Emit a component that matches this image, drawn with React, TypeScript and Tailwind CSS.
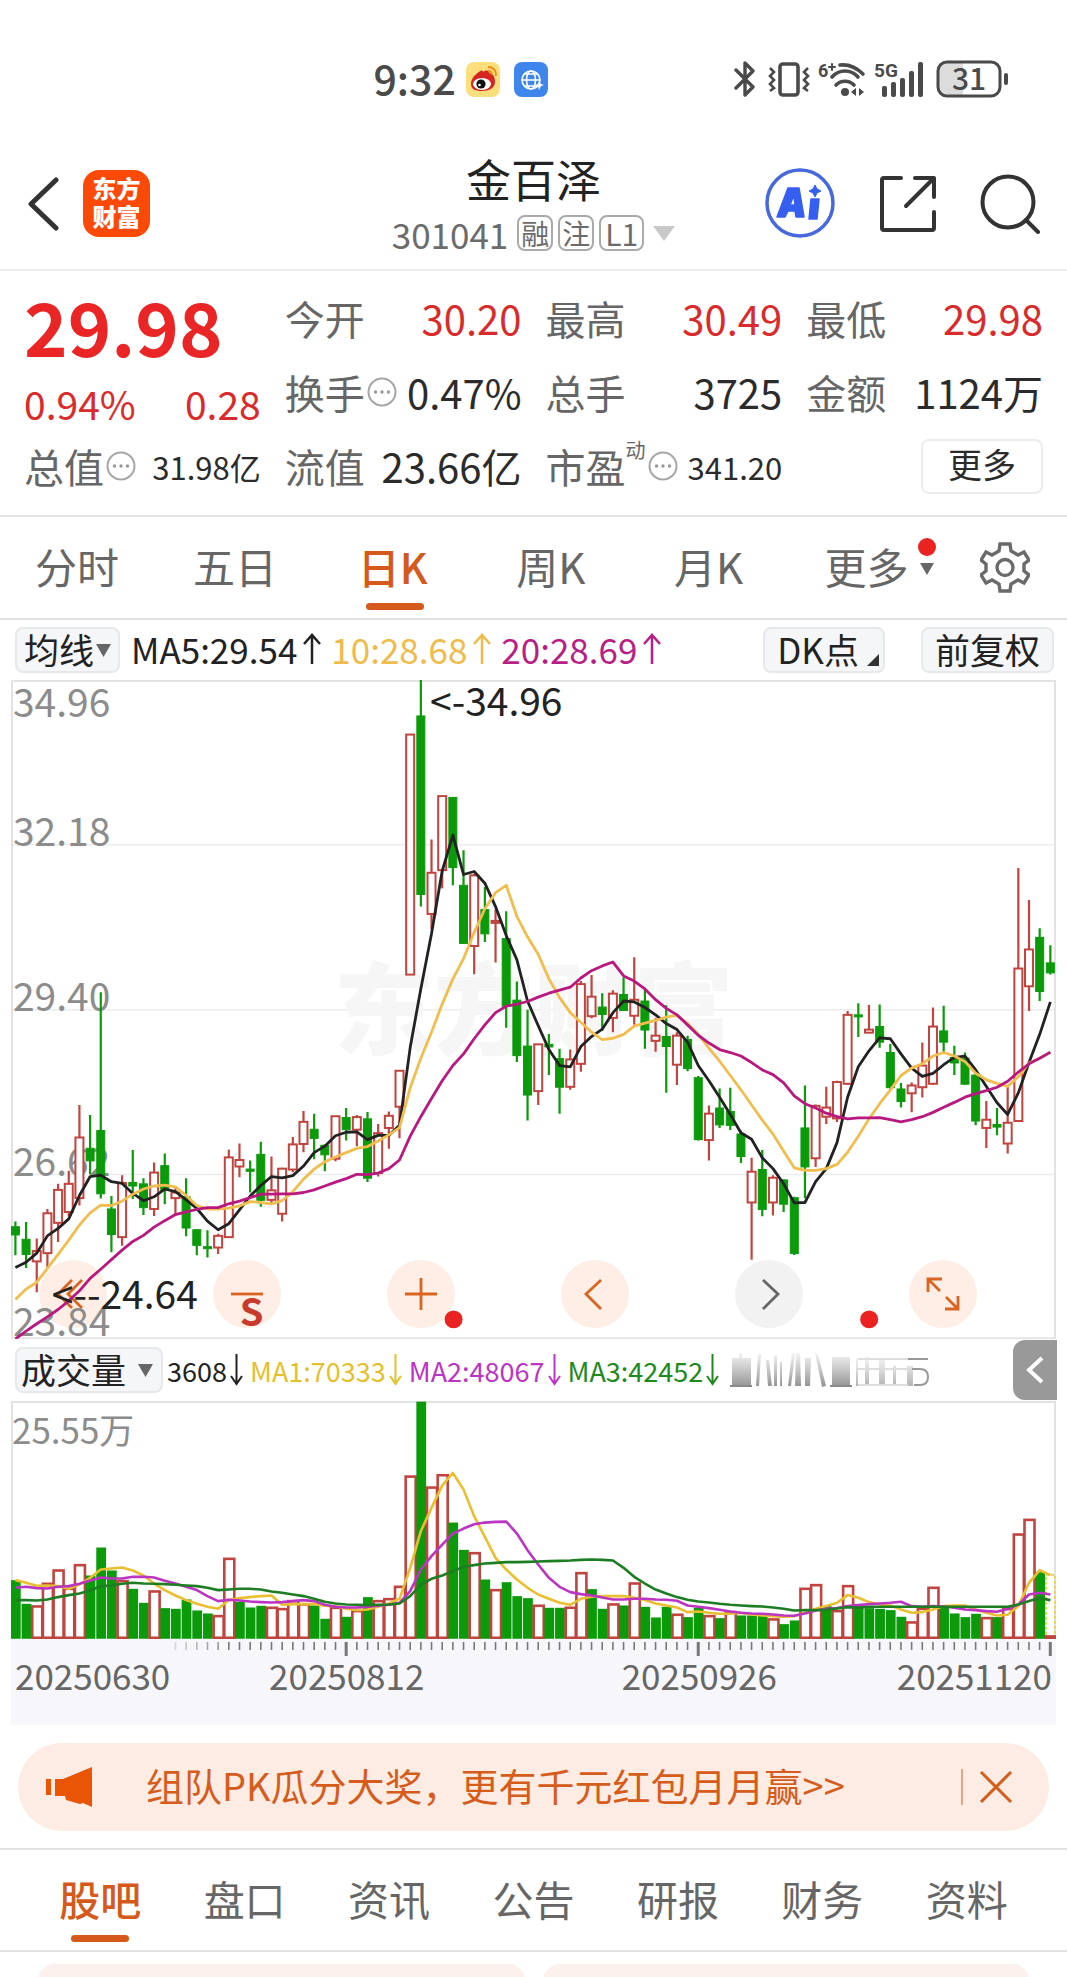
import React, { useState } from 'react';

type Kind = 'u' | 'd';
type Candle = [Kind, number, number, number, number];
type Volume = [Kind, number];

const UP = '#c0443f';
const DOWN = '#0a9a0a';
const STEP = 10.68;
const ORIGIN = 4.4;

// direction, high, body top, body bottom, low (chart units, growing downwards)
const candles: Candle[] = [
  ['d', 1272, 1284, 1303, 1350], ['d', 1273, 1313, 1348, 1379], ['u', 1311, 1340, 1364, 1435], ['u', 1243, 1253, 1345, 1378],
  ['u', 1185, 1199, 1275, 1319], ['u', 1155, 1185, 1250, 1260], ['u', 1003, 1078, 1218, 1235], ['d', 1026, 1103, 1132, 1163],
  ['d', 743, 1062, 1208, 1219], ['d', 1213, 1243, 1302, 1343], ['u', 1165, 1183, 1308, 1328], ['d', 1107, 1182, 1190, 1220],
  ['d', 1172, 1185, 1240, 1257], ['u', 1136, 1159, 1243, 1259], ['d', 1115, 1143, 1200, 1232], ['u', 1195, 1205, 1218, 1255],
  ['d', 1172, 1215, 1287, 1306], ['d', 1290, 1291, 1327, 1350], ['d', 1292, 1330, 1334, 1355], ['u', 1300, 1305, 1332, 1347],
  ['u', 1106, 1124, 1308, 1308], ['u', 1092, 1130, 1145, 1170], ['d', 1131, 1151, 1156, 1205], ['d', 1088, 1117, 1223, 1238],
  ['u', 1122, 1200, 1222, 1230], ['u', 1148, 1150, 1254, 1272], ['u', 1077, 1094, 1152, 1158], ['u', 1017, 1042, 1093, 1112],
  ['d', 1023, 1059, 1080, 1128], ['d', 1094, 1096, 1118, 1156], ['u', 1028, 1029, 1127, 1133], ['d', 1010, 1032, 1060, 1085],
  ['u', 1026, 1031, 1060, 1098], ['d', 1019, 1035, 1172, 1181], ['u', 1047, 1068, 1160, 1168], ['u', 1018, 1028, 1056, 1104],
  ['u', 923, 924, 1007, 1080], ['u', 147, 148, 702, 703], ['d', 22, 105, 517, 545], ['u', 390, 467, 562, 597],
  ['u', 290, 290, 461, 503], ['d', 292, 293, 455, 496], ['d', 415, 496, 630, 631], ['u', 470, 473, 636, 701],
  ['d', 500, 552, 608, 627], ['u', 552, 578, 582, 674], ['d', 556, 619, 775, 825], ['d', 718, 761, 889, 904],
  ['d', 783, 867, 980, 1039], ['u', 862, 863, 971, 1003], ['d', 839, 863, 869, 934], ['d', 873, 896, 962, 1023],
  ['u', 875, 898, 961, 968], ['u', 717, 724, 908, 926], ['u', 703, 753, 798, 803], ['d', 745, 777, 794, 832],
  ['u', 738, 746, 802, 835], ['d', 708, 748, 785, 785], ['u', 662, 760, 797, 818], ['d', 736, 763, 830, 873],
  ['u', 803, 843, 855, 880], ['d', 773, 845, 868, 975], ['u', 835, 843, 910, 957], ['d', 843, 852, 919, 925],
  ['d', 936, 940, 1083, 1085], ['u', 1004, 1023, 1084, 1131], ['d', 965, 1010, 1049, 1056], ['d', 963, 1018, 1050, 1061],
  ['d', 1062, 1070, 1122, 1137], ['u', 1125, 1157, 1228, 1360], ['d', 1107, 1152, 1244, 1260], ['u', 1165, 1171, 1228, 1258],
  ['d', 1175, 1176, 1232, 1250], ['d', 1215, 1217, 1346, 1349], ['d', 958, 1056, 1146, 1218], ['u', 1002, 1005, 1126, 1146],
  ['u', 961, 1009, 1030, 1047], ['u', 947, 950, 1034, 1042], ['u', 786, 795, 954, 957], ['d', 768, 795, 799, 846],
  ['u', 772, 829, 836, 836], ['d', 771, 822, 858, 871], ['d', 862, 882, 963, 970], ['d', 952, 966, 995, 1009],
  ['u', 951, 958, 976, 1020], ['u', 859, 912, 962, 986], ['u', 778, 822, 954, 957], ['d', 774, 832, 858, 885],
  ['d', 866, 893, 906, 934], ['d', 882, 895, 955, 957], ['d', 928, 934, 1040, 1050], ['u', 994, 1037, 1056, 1102],
  ['d', 1010, 1048, 1054, 1073], ['u', 960, 1044, 1092, 1115], ['u', 456, 688, 1040, 1040], ['u', 530, 644, 729, 786],
  ['d', 595, 616, 741, 763], ['d', 634, 675, 698, 702],
];

const ma5 = [
  1378, 1366, 1345, 1305, 1288, 1266, 1212, 1168, 1165, 1180, 1184, 1207, 1224, 1215, 1197, 1203, 1222, 1242, 1271, 1291,
  1277, 1245, 1213, 1189, 1168, 1171, 1166, 1144, 1113, 1098, 1074, 1066, 1065, 1083, 1073, 1073, 1050, 870, 735, 608,
  463, 380, 471, 464, 491, 545, 612, 668, 763, 820, 875, 912, 915, 868, 845, 828, 790, 763, 765, 778,
  795, 815, 829, 858, 912, 947, 985, 1025, 1067, 1082, 1125, 1150, 1185, 1229, 1228, 1180, 1150, 1090, 985, 915,
  878, 848, 850, 885, 918, 937, 930, 910, 893, 890, 922, 960, 998, 1025, 975, 905, 840, 765,
];
const ma10 = [
  1452, 1428, 1412, 1380, 1348, 1315, 1280, 1252, 1234, 1235, 1225, 1209, 1197, 1190, 1188, 1192, 1212, 1235, 1243, 1243,
  1241, 1236, 1226, 1228, 1231, 1224, 1203, 1174, 1151, 1134, 1123, 1113, 1103, 1099, 1086, 1072, 1055, 963, 895, 835,
  770, 712, 665, 605, 550, 513, 496, 568, 615, 655, 712, 755, 790, 812, 835, 852, 849, 840, 821, 814,
  808, 800, 796, 815, 840, 872, 902, 935, 968, 1003, 1038, 1070, 1110, 1148, 1154, 1154, 1150, 1140, 1112, 1075,
  1035, 1000, 968, 935, 918, 908, 890, 882, 890, 903, 930, 945, 953, 960, 938, 906, 895, 882,
];
const ma20 = [
  1543, 1525, 1508, 1492, 1475, 1455, 1432, 1403, 1382, 1360, 1338, 1318, 1304, 1285, 1270, 1256, 1250, 1244, 1240, 1240,
  1231, 1225, 1217, 1209, 1209, 1208, 1208, 1205, 1199, 1190, 1181, 1173, 1163, 1164, 1160, 1150, 1130, 1075, 1030, 988,
  947, 912, 885, 850, 818, 790, 775, 770, 764, 754, 745, 738, 731, 710, 693, 682, 673, 705, 717, 735,
  760, 780, 795, 818, 842, 860, 875, 882, 890, 905, 922, 933, 952, 982, 1000, 1010, 1022, 1030, 1035, 1033,
  1033, 1032, 1037, 1042, 1037, 1030, 1020, 1008, 997, 985, 977, 970, 962, 948, 927, 908, 895, 881,
];

const volumes: Volume[] = [
  ['d', 752], ['d', 823], ['u', 828], ['u', 760], ['u', 720], ['u', 775], ['u', 704], ['d', 738], ['d', 654], ['d', 723],
  ['u', 752], ['d', 778], ['d', 820], ['u', 783], ['d', 836], ['d', 838], ['d', 810], ['d', 843], ['d', 852], ['u', 857],
  ['u', 685], ['d', 817], ['d', 834], ['d', 829], ['u', 832], ['u', 836], ['u', 812], ['u', 822], ['d', 828], ['d', 868],
  ['u', 832], ['d', 862], ['u', 842], ['d', 803], ['u', 812], ['u', 806], ['u', 769], ['u', 438], ['d', 216], ['u', 471],
  ['u', 434], ['d', 579], ['d', 661], ['u', 668], ['d', 750], ['u', 779], ['d', 758], ['d', 800], ['d', 806], ['u', 826],
  ['d', 835], ['d', 835], ['u', 832], ['u', 728], ['d', 779], ['d', 838], ['u', 822], ['d', 828], ['u', 759], ['d', 832],
  ['d', 864], ['d', 832], ['u', 853], ['d', 863], ['d', 835], ['u', 857], ['d', 866], ['u', 845], ['d', 858], ['d', 858],
  ['d', 858], ['u', 867], ['d', 884], ['d', 873], ['u', 775], ['u', 764], ['d', 830], ['u', 842], ['u', 767], ['d', 825],
  ['d', 836], ['d', 838], ['d', 842], ['d', 862], ['u', 876], ['u', 835], ['u', 772], ['d', 832], ['d', 852], ['d', 863],
  ['d', 853], ['u', 863], ['d', 863], ['u', 836], ['u', 612], ['u', 568], ['d', 728], ['u', 918],
];
const vol5 = [
  752, 760, 769, 768, 770, 778, 765, 745, 720, 717, 714, 723, 738, 762, 782, 798, 812, 823, 832, 838,
  812, 806, 803, 800, 798, 826, 824, 824, 824, 829, 830, 838, 842, 840, 832, 822, 808, 715, 605, 535,
  468, 430, 480, 560, 622, 685, 720, 750, 775, 795, 808, 820, 826, 808, 802, 800, 800, 800, 805, 812,
  822, 828, 834, 848, 846, 850, 853, 853, 850, 855, 858, 860, 862, 860, 850, 838, 830, 820, 797, 805,
  818, 825, 828, 840, 850, 848, 840, 830, 828, 828, 840, 850, 858, 856, 830, 760, 722, 737,
];
const vol10 = [
  775, 772, 776, 777, 772, 770, 763, 753, 744, 747, 747, 742, 742, 744, 754, 762, 772, 782, 800, 815,
  811, 813, 816, 818, 819, 818, 815, 812, 815, 826, 832, 834, 834, 832, 829, 826, 820, 785, 720, 680,
  645, 612, 597, 584, 579, 577, 576, 612, 662, 705, 745, 772, 788, 794, 798, 804, 810, 810, 808, 808,
  810, 811, 814, 828, 832, 836, 841, 846, 850, 852, 853, 855, 858, 859, 852, 843, 838, 836, 830, 827,
  824, 822, 820, 817, 830, 832, 830, 831, 835, 840, 842, 845, 847, 838, 825, 795, 790, 795,
];
const vol20 = [
  812, 812, 813, 810, 803, 797, 792, 783, 770, 768, 763, 760, 762, 763, 764, 766, 768, 770, 775, 782,
  780, 778, 778, 780, 786, 790, 795, 800, 808, 817, 822, 825, 826, 827, 826, 825, 822, 800, 765, 748,
  738, 725, 712, 707, 702, 700, 698, 698, 697, 696, 695, 694, 693, 691, 690, 691, 693, 715, 742, 762,
  780, 792, 803, 811, 816, 819, 823, 826, 828, 830, 831, 834, 838, 843, 842, 842, 841, 837, 833, 835,
  832, 832, 832, 832, 832, 832, 832, 832, 832, 832, 832, 832, 832, 832, 825, 815, 806, 812,
];

const xAt = (i: number) => ORIGIN + i * STEP;
const priceY = (v: number) => ((v - 22) * 660) / 1522;
const volumeY = (v: number) => (v - 214) / 3;
const toPoints = (values: number[], scale: (v: number) => number) =>
  values.map((v, i) => `${xAt(i).toFixed(1)},${scale(v).toFixed(1)}`).join(' ');

const priceLabels: [string, number][] = [['34.96', 37], ['32.18', 166], ['29.40', 331], ['26.62', 496], ['23.84', 657]];

const StatusIcons: React.FC = () => (
  <div className="flex items-center text-[#4a4a4a]">
    <svg width="22" height="36" viewBox="0 0 22 36" fill="none" stroke="currentColor" strokeWidth="3.400" strokeLinejoin="round" strokeLinecap="round">
      <path d="M2 9l17 17-8 8V2l8 8L2 27" />
    </svg>
    <svg className="ml-3" width="42" height="36" viewBox="0 0 42 36" fill="none" stroke="currentColor">
      <rect x="12" y="3" width="18" height="31" rx="3" strokeWidth="3.600" />
      <path d="M2 7l4 4-4 4 4 4-4 4 4 4-4 3M40 7l-4 4 4 4-4 4 4 4-4 4 4 3" strokeWidth="2.600" />
    </svg>
    <svg className="ml-2" width="48" height="38" viewBox="0 0 48 38" fill="none" stroke="currentColor" strokeWidth="3.600" strokeLinecap="round">
      <text x="0" y="17" fontSize="18" fontWeight="bold" fill="currentColor" stroke="none" fontFamily="Roboto">6</text>
      <path d="M11 7h6M14 4v6" strokeWidth="2" />
      <path d="M22 5c9-1 17 3 23 9M14 17c7-8 19-8 26 0M18 25c5-5 13-5 18 0" />
      <circle cx="27" cy="32" r="4" fill="currentColor" stroke="none" />
      <path d="M38 28v8l-5-4zM41 28v8l5-4z" fill="currentColor" stroke="none" />
    </svg>
    <svg className="ml-2" width="50" height="38" viewBox="0 0 50 38" fill="currentColor">
      <text x="0" y="17" fontSize="19" fontWeight="bold" fontFamily="Roboto">5G</text>
      <rect x="8" y="26" width="5" height="11" rx="2" />
      <rect x="17" y="22" width="5" height="15" rx="2" />
      <rect x="26" y="18" width="5" height="19" rx="2" />
      <rect x="35" y="11" width="5" height="26" rx="2" />
      <rect x="44" y="2" width="5" height="35" rx="2" />
    </svg>
    <svg className="ml-3" width="73" height="38" viewBox="0 0 73 38">
      <path d="M27 3H12Q3 3 3 12v14q0 9 9 9h15z" fill="#dcdcdc" />
      <rect x="2" y="2" width="62" height="34" rx="9" fill="none" stroke="currentColor" strokeWidth="3" />
      <rect x="68" y="13" width="4" height="12" rx="2" fill="currentColor" />
      <text x="33" y="30" textAnchor="middle" fontSize="30" fontWeight="500" fill="currentColor">31</text>
    </svg>
  </div>
);

const StatusBar: React.FC = () => (
  <div className="flex h-[134px] items-center justify-between pr-[58px] pl-[35%] pt-6">
    <div className="flex items-center">
      <span className="pb-1 text-[41px] font-medium text-[#4a4a4a]">9:32</span>
      <svg className="ml-[10px]" width="34" height="35" viewBox="0 0 34 35">
        <rect width="34" height="35" rx="8" fill="#fbdf7c" />
        <path d="M5 22c0-6 5-10 8-12 2-2 4-2 4 0 3-2 6-2 6 1 5 1 6 5 6 9 0 6-6 9-13 9S5 27 5 22z" fill="#d5251f" />
        <ellipse cx="16" cy="22" rx="9" ry="6" fill="#fff" />
        <circle cx="15" cy="22" r="4.600" fill="#111" />
        <circle cx="13.500" cy="23" r="1.300" fill="#fff" />
        <path d="M22 9q4 0 4 4M22 5q8 0 8 9" stroke="#f08a1c" strokeWidth="1.800" fill="none" />
      </svg>
      <svg className="ml-[14px]" width="34" height="35" viewBox="0 0 34 35">
        <rect width="34" height="35" rx="8" fill="#3f86ec" />
        <g fill="none" stroke="#fff" strokeWidth="1.600">
          <circle cx="17" cy="18" r="9" />
          <ellipse cx="17" cy="18" rx="4.500" ry="9" />
          <path d="M8 18h18M10 12h14M10 24h14" />
        </g>
        <path d="M25 19l2 3 3 1-3 1-2 4-1-4-3-1 3-1z" fill="#fff" />
      </svg>
    </div>
    <StatusIcons />
  </div>
);

const Header: React.FC = () => (
  <header className="grid h-[137px] grid-cols-[1fr_auto_1fr] items-center border-b-2 border-[#ececec] px-[27px] pt-1">
    <div className="flex items-center gap-6">
      <button aria-label="返回">
        <svg width="32" height="54" viewBox="0 0 32 54" fill="none" stroke="#333" strokeWidth="5" strokeLinecap="round" strokeLinejoin="round">
          <path d="M29 3L4 27l25 24" />
        </svg>
      </button>
      <a href="#home" className="flex h-[67px] w-[67px] flex-col items-center justify-center rounded-2xl bg-[#fb4a07] pb-1 text-2xl leading-[28px] font-black text-white">
        <span>东方</span>
        <span>财富</span>
      </a>
    </div>
    <div className="flex flex-col items-center gap-[14px]">
      <h1 className="text-[45px] text-[#222]">金百泽</h1>
      <div className="flex items-center gap-[5px] text-[#6b6b6b]">
        <span className="pr-1 text-[35px]">301041</span>
        <span className="rounded-lg border-2 border-[#aaa] px-[2px] text-[28px] leading-[32px]">融</span>
        <span className="rounded-lg border-2 border-[#aaa] px-[2px] text-[28px] leading-[32px]">注</span>
        <span className="rounded-lg border-2 border-[#aaa] px-1 text-[30px] leading-[32px]">L1</span>
        <svg className="ml-1" width="22" height="15" viewBox="0 0 22 15"><path d="M0 0h22L11 15z" fill="#c9c9c9" /></svg>
      </div>
    </div>
    <div className="flex items-center justify-end gap-[43px]">
      <button aria-label="AI">
        <svg width="71" height="71" viewBox="0 0 71 71">
          <circle cx="35" cy="35" r="33" fill="none" stroke="#4668dc" strokeWidth="3.500" />
          <path d="M23 20h11l5 29h-8l-1-6h-7l-3 6h-8zM29 27l-4 10h5z" fill="#355ff0" stroke="#355ff0" strokeWidth="1.500" strokeLinejoin="round" fillRule="evenodd" />
          <path d="M46 31h8l-2 20h-8z" fill="#355ff0" stroke="#355ff0" strokeWidth="1.500" strokeLinejoin="round" />
          <path d="M50 17l2 4 4 2-4 2-2 4-2-4-4-2 4-2z" fill="#355ff0" stroke="#355ff0" strokeWidth="1" />
        </svg>
      </button>
      <button aria-label="分享">
        <svg width="58" height="58" viewBox="0 0 58 58" fill="none" stroke="#333" strokeWidth="4" strokeLinecap="round" strokeLinejoin="round">
          <path d="M22 3H5q-2 0-2 2v48q0 2 2 2h48q2 0 2-2V37M36 3h19v19M55 3L27 31" />
        </svg>
      </button>
      <button aria-label="搜索">
        <svg width="60" height="60" viewBox="0 0 60 60" fill="none" stroke="#333" strokeWidth="4" strokeLinecap="round">
          <circle cx="28" cy="28" r="25.500" />
          <path d="M46 46l12 12" />
        </svg>
      </button>
    </div>
  </header>
);

const InfoDot: React.FC = () => (
  <svg className="ml-[2px] shrink-0" width="30" height="30" viewBox="0 0 30 30" fill="#999">
    <circle cx="15" cy="15" r="13.500" fill="none" stroke="#a6a6a6" strokeWidth="2" />
    <circle cx="8.500" cy="15" r="1.700" /><circle cx="15" cy="15" r="1.700" /><circle cx="21.500" cy="15" r="1.700" />
  </svg>
);

type QuoteProps = { label: string; value: string; red?: boolean; small?: boolean; info?: boolean; sup?: string };

const Quote: React.FC<QuoteProps> = ({ label, value, red, small, info, sup }) => (
  <div className="flex h-[74px] items-center justify-between whitespace-nowrap">
    <span className="flex items-center text-[40px] text-[#666]">
      {label}
      {sup && <span className="pb-8 text-xl">{sup}</span>}
      {info && <InfoDot />}
    </span>
    <span className={`${small ? 'text-[31px]' : 'text-[40px]'} ${red ? 'text-[#d92b2b]' : 'text-[#2b2b2b]'}`}>{value}</span>
  </div>
);

const QuotePanel: React.FC = () => (
  <section className="grid grid-cols-4 gap-6 border-b-2 border-[#e2e2e2] px-6 pt-[10px] pb-3">
    <div>
      <div className="flex h-[96px] items-center pb-2 text-[74px] font-bold text-[#e92526]">29.98</div>
      <div className="flex h-[52px] items-center justify-between text-[39px] text-[#d92b2b]">
        <span>0.94%</span>
        <span>0.28</span>
      </div>
      <Quote label="总值" value="31.98亿" small info />
    </div>
    <div>
      <Quote label="今开" value="30.20" red />
      <Quote label="换手" value="0.47%" info />
      <Quote label="流值" value="23.66亿" />
    </div>
    <div>
      <Quote label="最高" value="30.49" red />
      <Quote label="总手" value="3725" />
      <Quote label="市盈" value="341.20" sup="动" small info />
    </div>
    <div>
      <Quote label="最低" value="29.98" red />
      <Quote label="金额" value="1124万" />
      <div className="flex h-[74px] items-center justify-end">
        <button className="h-[55px] w-[122px] rounded-lg border-2 border-[#ececec] pb-1 text-[34px] text-[#2b2b2b]">更多</button>
      </div>
    </div>
  </section>
);

const PeriodTabs: React.FC = () => {
  const [active, setActive] = useState('日K');
  return (
    <nav className="flex h-[103px] border-b-2 border-[#e2e2e2] pr-1 text-[42px] text-[#666]">
      {['分时', '五日', '日K', '周K', '月K', '更多'].map(tab => (
        <button
          key={tab}
          onClick={() => setActive(tab)}
          className={`relative flex-4 pr-1 pb-1 ${active === tab ? 'font-medium text-[#d4591a]' : ''}`}
        >
          {tab}
          {active === tab && <span className="absolute bottom-[8px] left-1/2 h-[7px] w-[58px] -translate-x-1/2 rounded-full bg-[#d4591a]" />}
          {tab === '更多' && (
            <svg className="absolute top-[21px] right-3" width="18" height="38" viewBox="0 0 18 38">
              <circle cx="9" cy="9" r="9" fill="#ea2222" />
              <path d="M2 25h14L9 37z" fill="#666" />
            </svg>
          )}
        </button>
      ))}
      <button aria-label="设置" className="flex flex-3 items-center justify-center">
        <svg width="50" height="51" viewBox="0 0 50 51" fill="none" stroke="#6a6a6a" strokeWidth="3.400">
          <path d="M20 2h10l1 7 7 4 6-3 5 8-5 4v7l5 4-5 8-6-3-7 4-1 7H20l-1-7-7-4-6 3-5-8 5-4v-7l-5-4 5-8 6 3 7-4z" />
          <circle cx="25" cy="25.500" r="8" />
        </svg>
      </button>
    </nav>
  );
};

const chip = 'flex h-[46px] shrink-0 items-center whitespace-nowrap rounded-lg border-2 border-[#e6e8ec] bg-[#f5f6f8] pb-1 text-[35px] text-[#222]';

const Arrow: React.FC<{ down?: boolean }> = ({ down }) => (
  <svg className={down ? 'mx-[3px] shrink-0' : 'mx-[5px] shrink-0'} width={down ? 13 : 20} height="32" viewBox={down ? '0 0 13 32' : '0 0 20 32'} fill="none" stroke="currentColor" strokeWidth={down ? 2 : 2.5}>
    <path d={down ? 'M6.500 0v30M1 22l5.500 8 5.500-8' : 'M10 32V3M2 12l8-9 8 9'} />
  </svg>
);

const AverageRow: React.FC = () => (
  <div className="flex h-[60px] items-center justify-between pr-[13px] pl-[15px]">
    <div className="flex items-center text-[35px]">
      <button className={`${chip} gap-[2px] px-[7px]`}>
        均线
        <svg className="mt-1" width="15" height="13" viewBox="0 0 15 13"><path d="M0 0h15L7.500 13z" fill="#666" /></svg>
      </button>
      <span className="ml-[11px] flex items-center pb-1 text-[#222]">MA5:29.54<Arrow /></span>
      <span className="ml-1 flex items-center pb-1 text-[#efbb4c]">10:28.68<Arrow /></span>
      <span className="ml-1 flex items-center pb-1 text-[#b81f86]">20:28.69<Arrow /></span>
    </div>
    <div className="flex gap-9">
      <button className={`${chip} gap-2 pr-1 pl-3`}>
        DK点
        <svg className="mt-6" width="12" height="12" viewBox="0 0 12 12"><path d="M12 0v12H0z" fill="#333" /></svg>
      </button>
      <button className={`${chip} px-3`}>前复权</button>
    </div>
  </div>
);

const tools: { name: string; path: string; muted?: boolean }[] = [
  { name: '最早', path: 'M33 20L19 34l14 14M43 20L29 34l14 14' },
  { name: '缩小', path: 'M18 34h32' },
  { name: '放大', path: 'M18 34h32M34 18v32' },
  { name: '左移', path: 'M40 20L25 34l15 15' },
  { name: '右移', path: 'M28 20l15 14-15 15', muted: true },
  { name: '全屏', path: 'M19 32V19h14M19 19l12 12M49 36v13H36M49 49L37 37' },
];

const KLineChart: React.FC = () => (
  <div className="relative mx-[11px]">
    <div className="absolute right-[79px] bottom-[11px] left-7 flex justify-between">
      {tools.map(tool => (
        <button key={tool.name} aria-label={tool.name} className={`h-[68px] w-[68px] rounded-full ${tool.muted ? 'bg-[#f2f2f2]' : 'bg-[#feeee6]'}`}>
          <svg viewBox="0 0 68 68" fill="none" stroke={tool.muted ? '#666' : '#d9641f'} strokeWidth="2.800">
            <path d={tool.path} />
          </svg>
        </button>
      ))}
    </div>
    <svg className="pointer-events-none relative block h-auto w-full" viewBox="0 0 1046 660" fontSize="38">
      <g stroke="#ececec" strokeWidth="1.500">
        <path d="M0 165h1046M0 330h1046M0 495h1046" />
        <rect x="1" y="1" width="1044" height="658" fill="none" stroke="#e2e2e2" strokeWidth="2" />
      </g>
      <text x="523" y="367" textAnchor="middle" fontSize="100" fontWeight="900" fill="#f6f6f7">东方财富</text>
      {priceLabels.map(([label, y]) => (
        <text key={label} x="2" y={y} fontSize="39" fill="#8c8c8c">{label}</text>
      ))}
      {candles.map(([kind, high, top, bottom, low], i) => {
        const x = xAt(i);
        const color = kind === 'u' ? UP : DOWN;
        const y = priceY(top);
        const h = Math.max(priceY(bottom) - y, 2);
        return (
          <g key={i} stroke={color} strokeWidth="2.200">
            <path d={`M${x} ${priceY(high)}V${y}M${x} ${y + h}V${priceY(low)}`} />
            <rect x={x - 4} y={y} width="8" height={h} fill={kind === 'u' ? '#fff' : color} strokeWidth={kind === 'u' ? 2 : 1} />
          </g>
        );
      })}
      <g fill="none" strokeWidth="2.800" strokeLinejoin="round">
        <polyline points={toPoints(ma5, priceY)} stroke="#222" />
        <polyline points={toPoints(ma10, priceY)} stroke="#f2bd4f" />
        <polyline points={toPoints(ma20, priceY)} stroke="#b8187f" />
      </g>
      <g fill="#222" fontSize="39" textAnchor="end">
        <text x="552" y="36">&lt;-34.96</text>
        <text x="187" y="630">&lt;--24.64</text>
      </g>
      <text x="229" y="647" fill="#c83a2b" fontWeight="bold">S</text>
      <circle cx="443" cy="640" r="9" fill="#ea2222" />
      <circle cx="859" cy="640" r="9" fill="#ea2222" />
    </svg>
  </div>
);

const VolumeRow: React.FC = () => (
  <div className="mr-[10px] ml-[15px] flex h-[62px] items-center justify-between">
    <div className="flex items-center text-[27px]">
      <button className={`${chip} gap-3 pr-2 pl-1`}>
        成交量
        <svg className="mt-1" width="15" height="13" viewBox="0 0 15 13"><path d="M0 0h15L7.500 13z" fill="#666" /></svg>
      </button>
      <span className="ml-1 flex items-center text-[#222]">3608<Arrow down /></span>
      <span className="ml-1 flex items-center text-[#e4c02c]">MA1:70333<Arrow down /></span>
      <span className="ml-1 flex items-center text-[#bb34c4]">MA2:48067<Arrow down /></span>
      <span className="ml-1 flex items-center text-[#1d8a1d]">MA3:42452<Arrow down /></span>
      <svg className="ml-2" width="200" height="36" viewBox="0 0 200 36">
        <defs>
          <linearGradient id="smear" x1="0" y1="0" x2="0" y2="1">
            <stop offset="0" stopColor="#888" stopOpacity="0.1" />
            <stop offset="1" stopColor="#777" stopOpacity="0.8" />
          </linearGradient>
        </defs>
        <g fill="url(#smear)">
          <path d="M2 6h7V1h3v5h9v28H2zM28 2h3l-2 32h-3zM36 8h3l3 26h-4zM44 4h3v30h-3zM50 10h2v24h-2zM62 1l3 1-4 32h-3zM66 1h4l1 33h-6zM75 6h6l-1 28h-5zM85 1l3 1 8 32-4 1zM102 5h18v29h-18z" />
          <path d="M126 6h2v28h-2zM135 4h4v30h-4zM149 6h6v28h-6zM163 14h3v20h-3zM177 14h6v20h-6z" opacity="0.700" />
        </g>
        <g stroke="#999" strokeWidth="2" fill="none">
          <path d="M0 34h22M100 34h22" stroke="#888" />
          <path d="M128 7h50M128 17h50M128 33h50" stroke="#ddd" />
          <path d="M178 7h20M182 17h8q8 0 8 8t-8 8h-6" />
        </g>
      </svg>
    </div>
    <button aria-label="收起" className="flex h-[60px] w-11 shrink-0 items-center justify-center rounded-l-xl bg-[#999]">
      <svg width="18" height="28" viewBox="0 0 18 28" fill="none" stroke="#fff" strokeWidth="4"><path d="M16 2L3 14l13 12" /></svg>
    </button>
  </div>
);

const VolumeChart: React.FC = () => (
  <div className="mx-[11px]">
    <svg className="block h-auto w-full" viewBox="0 0 1046 238" fontSize="35">
      <path d="M1 238V1h1044v237" fill="none" stroke="#e2e2e2" strokeWidth="2" />
      <text x="1" y="43" fill="#8c8c8c">25.55万</text>
      {volumes.map(([kind, top], i) => {
        const y = volumeY(top);
        return kind === 'u'
          ? <rect key={i} x={xAt(i) - 4.5} y={y + 1} width="10" height={237 - y - 1} fill="#fff" stroke={UP} strokeWidth="2.600" />
          : <rect key={i} x={xAt(i) - 4.5} y={y} width="9.800" height={238 - y} fill={DOWN} />;
      })}
      <path d="M1036 234V174h9v60" fill="none" stroke="#f0cf4a" strokeWidth="2" strokeDasharray="3 2" />
      <g fill="none" strokeWidth="2.600" strokeLinejoin="round">
        <polyline points={toPoints(vol5, volumeY)} stroke="#eabf2f" />
        <polyline points={toPoints(vol10, volumeY)} stroke="#bb34c4" />
        <polyline points={toPoints(vol20, volumeY)} stroke="#1d7d22" />
      </g>
    </svg>
    <svg className="block h-auto w-full bg-[#f7f7fb]" viewBox="0 0 1046 86" fontSize="35" fill="#666">
      {volumes.map((_, i) => {
        if (i < 15) return null;
        const major = i === 31 || i === 64 || i === 97;
        return (
          <path key={i} d={`M${xAt(i)} 3v${major ? 14 : 8}`} stroke="#777" strokeWidth={major ? 3 : 1.6} opacity={i < 20 ? (i - 13) / 8 : 1} />
        );
      })}
      <text x="4" y="51">20250630</text>
      <text x="336" y="51" textAnchor="middle">20250812</text>
      <text x="689" y="51" textAnchor="middle">20250926</text>
      <text x="1042" y="51" textAnchor="end">20251120</text>
    </svg>
  </div>
);

const Banner: React.FC = () => {
  const [open, setOpen] = useState(true);
  if (!open) return null;
  return (
    <div className="mx-[18px] mt-[18px] mb-[17px] flex h-[88px] items-center rounded-full bg-[#fcece3] pr-[36px] pl-7 text-[#d65c1c]">
      <svg width="46" height="40" viewBox="0 0 46 40" fill="#e95504">
        <path d="M0 12h5v16H0zM9 12h8L46 0v40l-9-4-3 1-14-4-1-4H9z" />
      </svg>
      <a href="#promo" className="ml-[54px] flex-1 pb-1 text-[38px]">组队PK瓜分大奖，更有千元红包月月赢&gt;&gt;</a>
      <span className="h-9 w-[2px] bg-[#e3a585]" />
      <button aria-label="关闭" onClick={() => setOpen(false)} className="ml-4">
        <svg width="34" height="34" viewBox="0 0 34 34" stroke="#d65c1c" strokeWidth="3"><path d="M2 2l30 30M32 2L2 32" /></svg>
      </button>
    </div>
  );
};

const BottomTabs: React.FC = () => {
  const [active, setActive] = useState('股吧');
  return (
    <nav className="flex h-[104px] border-t-2 border-b-2 border-[#e2e2e2] px-7 text-[41px] text-[#666]">
      {['股吧', '盘口', '资讯', '公告', '研报', '财务', '资料'].map(tab => (
        <button
          key={tab}
          onClick={() => setActive(tab)}
          className={`relative flex-1 pb-1 ${active === tab ? 'font-medium text-[#d4591a]' : ''}`}
        >
          {tab}
          {active === tab && <span className="absolute bottom-[8px] left-1/2 h-[7px] w-[58px] -translate-x-1/2 rounded-full bg-[#d4591a]" />}
        </button>
      ))}
    </nav>
  );
};

const App: React.FC = () => (
  <main className="min-h-screen overflow-hidden bg-white font-['Noto_Sans_CJK_SC',sans-serif] leading-none">
    <StatusBar />
    <Header />
    <QuotePanel />
    <PeriodTabs />
    <AverageRow />
    <KLineChart />
    <VolumeRow />
    <VolumeChart />
    <Banner />
    <BottomTabs />
    <div className="flex gap-[18px] px-[38px] pt-3">
      <div className="h-4 flex-1 rounded-t-2xl bg-[#fdf1ee]" />
      <div className="h-4 flex-1 rounded-t-2xl bg-[#fdf1ee]" />
    </div>
  </main>
);

export default App;
